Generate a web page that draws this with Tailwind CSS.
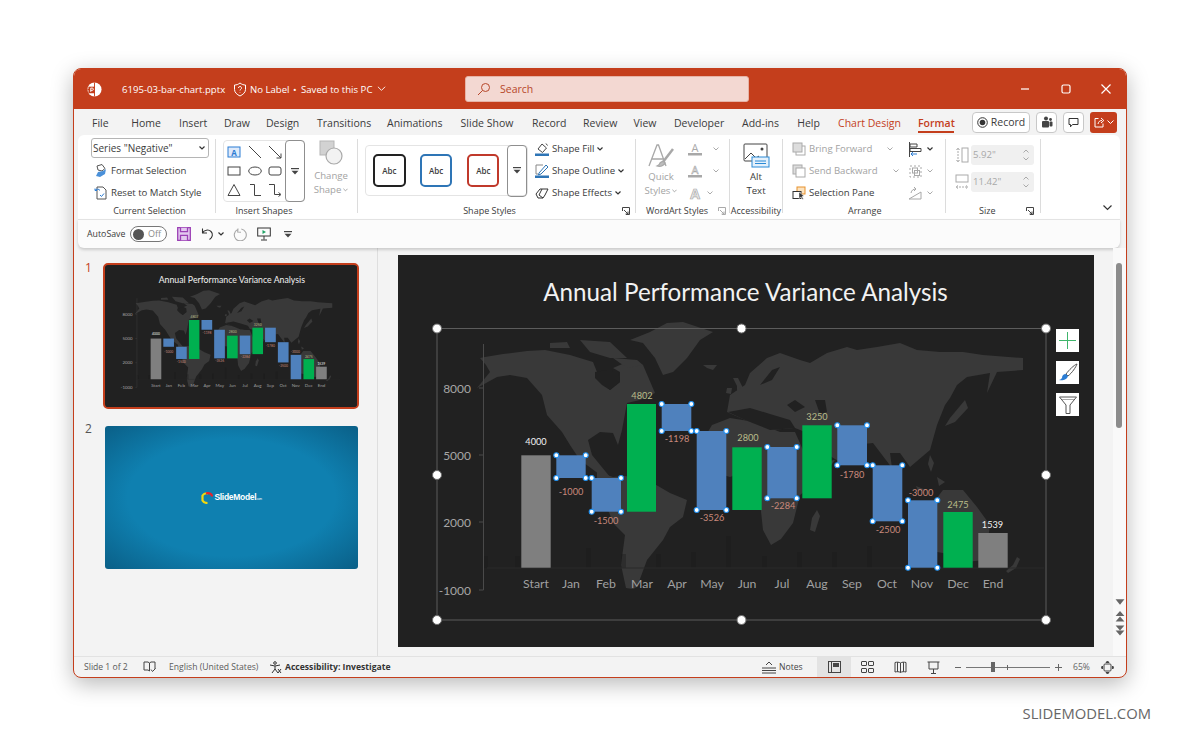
<!DOCTYPE html>
<html><head><meta charset="utf-8"><script src="https://cdn.jsdelivr.net/npm/@tailwindcss/browser@4"></script></head>
<body class="bg-white">
<div class="w-[1200px] h-[743px] overflow-hidden bg-white font-['Open_Sans',sans-serif] text-[#3b3b3b] pt-[68px] pl-[73px]">
<div class="w-[1054px] h-[610px] flex flex-col border border-[#c43e1c] rounded-lg bg-[#f3f3f3] shadow-[0_6px_22px_rgba(0,0,0,0.28)] overflow-hidden">

<!-- title bar -->
<div class="h-[40px] shrink-0 bg-[#c43e1c] text-white flex items-center text-[9.600px] whitespace-nowrap">
  <svg class="ml-[13px] w-[15px] h-[15px]" viewBox="0 0 16 16"><circle cx="8" cy="8" r="7.500" fill="#fff"/><path d="M8 .5v15M.5 8H8" stroke="#c43e1c" stroke-width="1"/><rect x="1.500" y="5" width="7" height="7" fill="#c43e1c"/><path d="M4 10.500V6.500h1.600a1.200 1.200 0 0 1 0 2.400H4" stroke="#fff" fill="none" stroke-width="1"/></svg>
  <span class="ml-[20px] w-[104px] pt-[2px]">6195-03-bar-chart.pptx</span>
  <svg class="ml-[7px] w-[14px] h-[15px]" viewBox="0 0 14 15" fill="none" stroke="#fff" stroke-width="1"><path d="M7 1c2 1.500 3.500 2 5.500 2v4.500c0 3-2.500 5-5.500 6.500-3-1.500-5.500-3.500-5.500-6.500V3C3.500 3 5 2.500 7 1z"/><path d="M5.500 6a1.500 1.500 0 1 1 2.200 1.300c-.5.3-.7.6-.7 1.200M7 10.500v.5"/></svg>
  <span class="ml-[3px] w-[39px] pt-[2px]">No Label</span><span class="ml-[4px] w-[3px] pt-[2px]">•</span><span class="ml-[5px] w-[72px] pt-[2px]">Saved to this PC</span>
  <svg class="ml-[4px] w-[9px] h-[6px]" viewBox="0 0 10 6" fill="none" stroke="#fff"><path d="M1 .5l4 4 4-4"/></svg>
  <div class="ml-[79px] w-[284px] h-[26px] rounded-[3px] bg-[#f3d8d2] border border-[#e6b3a6] flex items-center text-[#b7472a] text-[10.500px]">
    <svg class="ml-[11px] w-[14px] h-[14px]" viewBox="0 0 14 14" fill="none" stroke="#b7472a" stroke-width="1"><circle cx="8.500" cy="5.500" r="4"/><path d="M5.500 8.500L1 13"/></svg>
    <span class="ml-[9px] pt-[2px]">Search</span>
  </div>
  <svg class="ml-[271px] w-[10px] h-[10px]" viewBox="0 0 10 10" stroke="#f6dcd5" stroke-width="1.300"><path d="M1 5h8"/></svg>
  <svg class="ml-[31px] w-[10px] h-[10px]" viewBox="0 0 10 10" fill="none" stroke="#fff" stroke-width="1.200"><rect x="1" y="1" width="8" height="8" rx="1.500"/></svg>
  <svg class="ml-[30px] w-[10px] h-[10px]" viewBox="0 0 10 10" stroke="#fff" stroke-width="1.200"><path d="M.5.5l9 9M9.500.5l-9 9"/></svg>
</div>

<!-- tabs -->
<div class="h-[26px] shrink-0 flex items-center text-[10.500px] whitespace-nowrap">
  <div class="flex items-center h-full pt-[3px]">
    <span class="ml-[18px] w-[16px] text-center">File</span>
    <span class="ml-[23px] w-[30px] text-center">Home</span>
    <span class="ml-[18px] w-[27px] text-center">Insert</span>
    <span class="ml-[18px] w-[25px] text-center">Draw</span>
    <span class="ml-[17px] w-[33px] text-center">Design</span>
    <span class="ml-[18px] w-[52px] text-center">Transitions</span>
    <span class="ml-[18px] w-[55px] text-center">Animations</span>
    <span class="ml-[18px] w-[54px] text-center">Slide Show</span>
    <span class="ml-[18px] w-[33px] text-center">Record</span>
    <span class="ml-[18px] w-[33px] text-center">Review</span>
    <span class="ml-[17px] w-[24px] text-center">View</span>
    <span class="ml-[17px] w-[50px] text-center">Developer</span>
    <span class="ml-[17px] w-[39px] text-center">Add-ins</span>
    <span class="ml-[17px] w-[23px] text-center">Help</span>
    <span class="ml-[18px] w-[63px] text-center text-[#c43e1c]">Chart Design</span>
    <span class="relative ml-[17px] w-[36px] text-center font-semibold text-[#c43e1c] after:absolute after:left-0 after:right-0 after:-bottom-[2px] after:h-[2px] after:bg-[#c43e1c]">Format</span>
  </div>
  <div class="ml-[18px] w-[58px] h-[21px] rounded-[4px] border border-[#c8c8c8] bg-white flex items-center justify-center gap-[3px] text-[10.500px]">
    <svg class="w-[11px] h-[11px]" viewBox="0 0 11 11"><circle cx="5.500" cy="5.500" r="4.800" fill="none" stroke="#333"/><circle cx="5.500" cy="5.500" r="2.800" fill="#333"/></svg><span class="pt-[1px]">Record</span>
  </div>
  <div class="ml-[6px] w-[21px] h-[21px] rounded-[4px] border border-[#c8c8c8] bg-white flex items-center justify-center">
    <svg class="w-[12px] h-[12px]" viewBox="0 0 12 12" fill="#444"><circle cx="5" cy="2.500" r="2"/><circle cx="9.500" cy="3.500" r="1.400"/><rect x="1" y="5" width="7" height="6.500" rx="1"/><rect x="8.500" y="5.500" width="3" height="5" rx="1"/></svg>
  </div>
  <div class="ml-[6px] w-[21px] h-[21px] rounded-[4px] border border-[#c8c8c8] bg-white flex items-center justify-center">
    <svg class="w-[11px] h-[11px]" viewBox="0 0 11 11" fill="none" stroke="#333"><path d="M1 1.500h9v6H4.500L2.500 9.800V7.500H1z"/></svg>
  </div>
  <div class="ml-[6px] w-[27px] h-[21px] rounded-[3px] bg-[#c43e1c] flex items-center justify-center gap-[2px]">
    <svg class="w-[11px] h-[11px]" viewBox="0 0 11 11" fill="none" stroke="#fff"><path d="M4.500 1.500H1v8.500h8V6.500M4 7c.5-2.500 2-3.500 4-3.500M7 1l2.800 2.500L7 6"/></svg>
    <svg class="w-[7px] h-[5px]" viewBox="0 0 7 5" fill="none" stroke="#fff"><path d="M.5.500l3 3 3-3"/></svg>
  </div>
</div>

<!-- ribbon -->
<div class="ml-[4px] w-[1042px] h-[84px] shrink-0 bg-white rounded-t-md flex text-[9.600px] whitespace-nowrap">
  <!-- Current Selection -->
  <div class="w-[137px] h-full flex flex-col relative">
    <div class="ml-[13px] mt-[3px] w-[118px] h-[20px] rounded-[3px] border border-[#b5b5b5] bg-white flex items-center pl-[1px] pr-[3px] justify-between text-[10px]">
      <span>Series "Negative"</span>
      <svg class="w-[6px] h-[4px]" viewBox="0 0 6 4" fill="none" stroke="#333" stroke-width="1.200"><path d="M.5.500l2.500 2.500L5.500.500"/></svg>
    </div>
    <div class="ml-[16px] mt-[2px] h-[22px] flex items-center gap-[3px]">
      <svg class="w-[14px] h-[14px]" viewBox="0 0 14 14" fill="none"><path d="M3 2l5-1.500 3 4L8 7 4 6z" stroke="#555"/><path d="M4 8l5-1 3-2-1 5-5 3-4-1z" fill="#4a90d9"/></svg>
      <span>Format Selection</span>
    </div>
    <div class="ml-[16px] h-[22px] flex items-center gap-[3px]">
      <svg class="w-[14px] h-[14px]" viewBox="0 0 14 14" fill="none" stroke="#555"><path d="M3 1h6l3 3v9H3z"/><path d="M1 4.500a3 3 0 0 1 5 0M1 2.500v2h2" stroke="#2b7cd3"/><path d="M6 9l1.500 1.500L10 7.500" stroke="#2b7cd3"/></svg>
      <span>Reset to Match Style</span>
    </div>
    <div class="absolute bottom-[2px] left-0 right-0 text-center text-[9px] pl-[6px]">Current Selection</div>
  </div>
  <div class="w-px h-[74px] mt-[4px] bg-[#dcdcdc]"></div>
  <!-- Insert Shapes -->
  <div class="w-[141px] h-full relative flex">
    <div class="ml-[7px] mt-[5px] w-[82px] h-[62px] rounded-[4px] border border-[#e4e4e4] flex">
      <div class="w-[62px] grid grid-cols-3 place-items-center py-[2px]">
        <svg class="w-[14px] h-[14px] overflow-visible" viewBox="0 0 14 14"><rect x="1" y="2" width="12" height="10" fill="#dfeafa" stroke="#2b7cd3"/><text x="7" y="10.500" text-anchor="middle" font-size="8" font-weight="700" fill="#2b7cd3">A</text></svg>
        <svg class="w-[14px] h-[14px]" viewBox="0 0 14 14" stroke="#444"><path d="M1 1l12 12"/></svg>
        <svg class="w-[14px] h-[14px]" viewBox="0 0 14 14" stroke="#444" fill="none"><path d="M1 1l12 12M13 8.500V13H8.500"/></svg>
        <svg class="w-[14px] h-[14px]" viewBox="0 0 14 14" stroke="#444" fill="none"><rect x="1" y="3" width="12" height="8"/></svg>
        <svg class="w-[14px] h-[14px]" viewBox="0 0 14 14" stroke="#444" fill="none"><ellipse cx="7" cy="7" rx="6.300" ry="4"/></svg>
        <svg class="w-[14px] h-[14px]" viewBox="0 0 14 14" stroke="#444" fill="none"><rect x="1" y="3" width="12" height="8" rx="2"/></svg>
        <svg class="w-[14px] h-[14px]" viewBox="0 0 14 14" stroke="#444" fill="none"><path d="M7 1.500L13 12.500H1z"/></svg>
        <svg class="w-[14px] h-[14px]" viewBox="0 0 14 14" stroke="#444" fill="none"><path d="M2 1.500h4.500v11H13"/></svg>
        <svg class="w-[14px] h-[14px]" viewBox="0 0 14 14" stroke="#444" fill="none"><path d="M1 1.500h5.500v10H12M10.500 9.500l2.500 2-2.500 2"/></svg>
      </div>
      <div class="w-[20px] -my-px -mr-px border border-[#8f8f8f] rounded-[4px] flex items-center justify-center">
        <svg class="w-[8px] h-[7px]" viewBox="0 0 8 7" fill="#444"><rect y="0" width="8" height="1.200"/><path d="M.5 2.800h7L4 6.500z"/></svg>
      </div>
    </div>
    <div class="ml-[7px] mt-[5px] w-[38px] flex flex-col items-center text-[#a3a3a3] leading-[14px]">
      <svg class="w-[26px] h-[26px] mb-[3px]" viewBox="0 0 26 26"><rect x="2" y="1" width="14" height="14" fill="#d2d2d2" stroke="#b5b5b5"/><circle cx="16" cy="16" r="8" fill="#f2f2f2" stroke="#a9a9a9" stroke-width="1.200"/></svg>
      <span>Change</span><span class="flex items-center gap-[2px]">Shape<svg class="w-[5px] h-[4px]" viewBox="0 0 6 4" fill="none" stroke="#999"><path d="M.5.500l2.500 2.500L5.500.500"/></svg></span>
    </div>
    <div class="absolute bottom-[2px] left-0 w-[96px] text-center text-[9px]">Insert Shapes</div>
  </div>
  <div class="w-px h-[74px] mt-[4px] bg-[#dcdcdc]"></div>
  <!-- Shape styles -->
  <div class="w-[277px] h-full relative flex">
    <div class="ml-[7px] mt-[10px] w-[163px] h-[51px] rounded-[4px] border border-[#e4e4e4] flex items-center">
      <div class="ml-[7px] w-[33px] h-[33px] rounded-[5px] border-2 border-[#222] flex items-center justify-center text-[8px] font-semibold">Abc</div>
      <div class="ml-[14px] w-[33px] h-[33px] rounded-[5px] border-2 border-[#2e75b6] flex items-center justify-center text-[8px] font-semibold">Abc</div>
      <div class="ml-[15px] w-[32px] h-[33px] rounded-[5px] border-2 border-[#c0392b] flex items-center justify-center text-[8px] font-semibold">Abc</div>
      <div class="ml-[8px] w-[20px] h-[52px] border border-[#8f8f8f] rounded-[4px] flex items-center justify-center">
        <svg class="w-[8px] h-[7px]" viewBox="0 0 8 7" fill="#444"><rect y="0" width="8" height="1.200"/><path d="M.5 2.800h7L4 6.500z"/></svg>
      </div>
    </div>
    <div class="ml-[7px] mt-[3px] flex flex-col">
      <div class="h-[22px] flex items-center gap-[3px]"><svg class="w-[14px] h-[14px]" viewBox="0 0 14 14" fill="none"><path d="M3 7l4-5 4.500 4-4 4.500z" stroke="#444"/><path d="M11 1.500l1.500 2" stroke="#444"/><rect y="11.500" width="14" height="2.500" fill="#2e75b6"/></svg>Shape Fill<svg class="w-[6px] h-[4px]" viewBox="0 0 6 4" fill="none" stroke="#333" stroke-width="1.200"><path d="M.5.500l2.500 2.500L5.500.500"/></svg></div>
      <div class="h-[22px] flex items-center gap-[3px]"><svg class="w-[14px] h-[14px]" viewBox="0 0 14 14" fill="none"><path d="M1 1h7M1 1v9h2" stroke="#888"/><path d="M4 9l7-8 2 2-7 7-2.500 1z" stroke="#2e75b6"/><rect y="11.500" width="14" height="2.500" fill="#2e75b6"/></svg>Shape Outline<svg class="w-[6px] h-[4px]" viewBox="0 0 6 4" fill="none" stroke="#333" stroke-width="1.200"><path d="M.5.500l2.500 2.500L5.500.500"/></svg></div>
      <div class="h-[22px] flex items-center gap-[3px]"><svg class="w-[14px] h-[14px]" viewBox="0 0 14 14" fill="none" stroke="#333"><path d="M1 8l4-5h8l-3 6-2 3H3z"/><path d="M7 3L4 9l4 3" /></svg>Shape Effects<svg class="w-[6px] h-[4px]" viewBox="0 0 6 4" fill="none" stroke="#333" stroke-width="1.200"><path d="M.5.500l2.500 2.500L5.500.500"/></svg></div>
    </div>
    <div class="absolute bottom-[2px] left-[7px] w-[249px] text-center text-[9px]">Shape Styles</div>
    <svg class="absolute right-[5px] bottom-[4px] w-[8px] h-[8px]" viewBox="0 0 8 8" fill="none" stroke="#444"><path d="M.5 4V.5H7.500V7.500H4M2 3l4 4M6 4.500V7H3.500"/></svg>
  </div>
  <div class="w-px h-[74px] mt-[4px] bg-[#dcdcdc]"></div>
  <!-- WordArt -->
  <div class="w-[93px] h-full relative flex text-[#a3a3a3]">
    <div class="ml-[7px] mt-[8px] w-[36px] flex flex-col items-center leading-[14px]">
      <svg class="w-[28px] h-[26px] mb-[1px]" viewBox="0 0 28 26" fill="none" stroke="#a8a8a8" stroke-width="1.300"><path d="M2 23L10 2h1.500L19 23M5 16h11"/><path d="M26 6L16 19" stroke-width="2.500"/><path d="M13 20c2-2 4-2 5 0-1 3-5 4-8 3 2-1 3-2 3-3z" fill="#bdbdbd"/></svg>
      <span>Quick</span><span class="flex items-center gap-[2px]">Styles<svg class="w-[5px] h-[4px]" viewBox="0 0 6 4" fill="none" stroke="#999"><path d="M.5.500l2.500 2.500L5.500.500"/></svg></span>
    </div>
    <div class="ml-[9px] mt-[3px] flex flex-col">
      <div class="h-[22px] flex items-center gap-[11px]"><svg class="w-[14px] h-[14px] overflow-visible" viewBox="0 0 14 14"><text x="7" y="10" text-anchor="middle" font-size="11" fill="#aaa">A</text><rect x="0" y="11" width="14" height="2.500" fill="#a8a8a8"/></svg><svg class="w-[6px] h-[4px]" viewBox="0 0 6 4" fill="none" stroke="#aaa"><path d="M.5.500l2.500 2.500L5.500.500"/></svg></div>
      <div class="h-[22px] flex items-center gap-[11px]"><svg class="w-[14px] h-[14px] overflow-visible" viewBox="0 0 14 14"><text x="7" y="10" text-anchor="middle" font-size="11" fill="none" stroke="#aaa" stroke-width=".6">A</text><rect x="0" y="11" width="14" height="2.500" fill="#a8a8a8"/></svg><svg class="w-[6px] h-[4px]" viewBox="0 0 6 4" fill="none" stroke="#aaa"><path d="M.5.500l2.500 2.500L5.500.500"/></svg></div>
      <div class="h-[22px] flex items-center gap-[5px]"><svg class="w-[14px] h-[14px] overflow-visible" viewBox="0 0 14 14"><text x="7" y="12.500" text-anchor="middle" font-size="14" font-weight="700" fill="#e8e8e8" stroke="#aaa" stroke-width=".7">A</text></svg><svg class="w-[6px] h-[4px]" viewBox="0 0 6 4" fill="none" stroke="#aaa"><path d="M.5.500l2.500 2.500L5.500.500"/></svg></div>
    </div>
    <div class="absolute bottom-[2px] left-[10px] text-[9px] text-[#3b3b3b]">WordArt Styles</div>
    <svg class="absolute right-[3px] bottom-[4px] w-[8px] h-[8px]" viewBox="0 0 8 8" fill="none" stroke="#aaa"><path d="M.5 4V.5H7.500V7.500H4M2 3l4 4M6 4.500V7H3.500"/></svg>
  </div>
  <div class="w-px h-[74px] mt-[4px] bg-[#dcdcdc]"></div>
  <!-- Accessibility -->
  <div class="w-[52px] h-full relative flex flex-col items-center">
    <svg class="mt-[8px] mb-[1px] w-[27px] h-[26px]" viewBox="0 0 27 26" fill="none"><rect x="1" y="1" width="23" height="17" rx="1" stroke="#444"/><path d="M2 16l6-6 5 5 3-2" stroke="#444"/><circle cx="19" cy="6" r="1.500" fill="#444"/><rect x="9" y="14" width="17" height="10" fill="#e5f1fb" stroke="#2b8ad6"/><path d="M12 18h11M12 20.500h11" stroke="#2b8ad6"/></svg>
    <span class="leading-[14px]">Alt</span><span class="leading-[14px]">Text</span>
    <div class="absolute bottom-[2px] left-0 right-0 text-center text-[9px]">Accessibility</div>
  </div>
  <div class="w-px h-[74px] mt-[4px] bg-[#dcdcdc]"></div>
  <!-- Arrange -->
  <div class="w-[162px] h-full relative flex">
    <div class="ml-[9px] mt-[3px] w-[113px] flex flex-col text-[#a3a3a3]">
      <div class="h-[22px] flex items-center"><svg class="w-[14px] h-[14px]" viewBox="0 0 14 14" fill="none" stroke="#aaa"><rect x="4" y="4" width="9" height="9"/><rect x="1" y="1" width="9" height="9" fill="#ddd"/></svg><span class="ml-[3px]">Bring Forward</span><svg class="ml-[15px] w-[6px] h-[4px]" viewBox="0 0 6 4" fill="none" stroke="#aaa"><path d="M.5.500l2.500 2.500L5.500.500"/></svg></div>
      <div class="h-[22px] flex items-center"><svg class="w-[14px] h-[14px]" viewBox="0 0 14 14" fill="none" stroke="#aaa"><rect x="1" y="1" width="9" height="9" fill="#ddd"/><rect x="4" y="4" width="9" height="9" fill="#fff"/></svg><span class="ml-[3px]">Send Backward</span><svg class="ml-[15px] w-[6px] h-[4px]" viewBox="0 0 6 4" fill="none" stroke="#aaa"><path d="M.5.500l2.500 2.500L5.500.500"/></svg></div>
      <div class="h-[22px] flex items-center text-[#3b3b3b]"><svg class="w-[14px] h-[14px]" viewBox="0 0 14 14" fill="none"><rect x="5" y="1" width="8" height="7" fill="#fbe3c0" stroke="#e8912d"/><rect x="1" y="5.500" width="8" height="7" fill="#fff" stroke="#333"/><path d="M7 6l5 4-2 .5 1.500 2.500-1 .5L9 11l-2 1.500z" fill="#333" stroke="#fff" stroke-width=".5"/></svg><span class="ml-[3px]">Selection Pane</span></div>
    </div>
    <div class="ml-[3px] mt-[3px] flex flex-col">
      <div class="h-[22px] flex items-center gap-[4px]"><svg class="w-[15px] h-[15px]" viewBox="0 0 15 15" fill="none"><path d="M1.500 0v15" stroke="#444"/><path d="M2 2h7v3H2zM2 6.500h11v3H2z" stroke="#444"/><path d="M9 12H3M5 10l-2 2 2 2" stroke="#2b7cd3"/></svg><svg class="w-[6px] h-[4px]" viewBox="0 0 6 4" fill="none" stroke="#333" stroke-width="1.200"><path d="M.5.500l2.500 2.500L5.500.500"/></svg></div>
      <div class="h-[22px] flex items-center gap-[4px]"><svg class="w-[15px] h-[15px]" viewBox="0 0 15 15" fill="none" stroke="#a8a8a8"><rect x="2" y="2" width="11" height="11" stroke-dasharray="2 2"/><rect x="4.500" y="4" width="5" height="5"/><rect x="6.500" y="6.500" width="5" height="5"/></svg><svg class="w-[6px] h-[4px]" viewBox="0 0 6 4" fill="none" stroke="#aaa"><path d="M.5.500l2.500 2.500L5.500.500"/></svg></div>
      <div class="h-[22px] flex items-center gap-[4px]"><svg class="w-[15px] h-[15px]" viewBox="0 0 15 15" fill="none" stroke="#a8a8a8"><path d="M1 13L13 6v7zM3 7a5 5 0 0 1 5-4M6 1l2 2-2 2"/></svg><svg class="w-[6px] h-[4px]" viewBox="0 0 6 4" fill="none" stroke="#aaa"><path d="M.5.500l2.500 2.500L5.500.500"/></svg></div>
    </div>
    <div class="absolute bottom-[2px] left-[65px] text-[9px]">Arrange</div>
  </div>
  <div class="w-px h-[74px] mt-[4px] bg-[#dcdcdc]"></div>
  <!-- Size -->
  <div class="w-[94px] h-full relative">
    <div class="ml-[9px] mt-[10px] flex items-center gap-[2px]">
      <svg class="w-[14px] h-[16px]" viewBox="0 0 14 16" fill="none" stroke="#aaa"><rect x="7" y="1" width="6" height="14"/><path d="M3 1v14M1.500 3L3 1l1.500 2M1.500 13L3 15l1.500-2" stroke-dasharray="2 1"/></svg>
      <div class="w-[63px] h-[20px] rounded-[3px] bg-[#f0f0f0] text-[#a8a8a8] flex items-center justify-between pl-[2px] pr-[5px]"><span>5.92"</span><svg class="w-[6px] h-[12px]" viewBox="0 0 6 12" fill="none" stroke="#aaa"><path d="M.5 3.500L3 1l2.500 2.500M.5 8.500L3 11l2.500-2.500"/></svg></div>
    </div>
    <div class="ml-[9px] mt-[7px] flex items-center gap-[2px]">
      <svg class="w-[14px] h-[16px]" viewBox="0 0 14 16" fill="none" stroke="#aaa"><rect x="1" y="1" width="12" height="7"/><path d="M1 13h12M3 11.500L1 13l2 1.500M11 11.500L13 13l-2 1.500" stroke-dasharray="2 1"/></svg>
      <div class="w-[63px] h-[20px] rounded-[3px] bg-[#f0f0f0] text-[#a8a8a8] flex items-center justify-between pl-[2px] pr-[5px]"><span>11.42"</span><svg class="w-[6px] h-[12px]" viewBox="0 0 6 12" fill="none" stroke="#aaa"><path d="M.5 3.500L3 1l2.500 2.500M.5 8.500L3 11l2.500-2.500"/></svg></div>
    </div>
    <div class="absolute bottom-[2px] left-[33px] text-[9px]">Size</div>
    <svg class="absolute right-[6px] bottom-[4px] w-[8px] h-[8px]" viewBox="0 0 8 8" fill="none" stroke="#444"><path d="M.5 4V.5H7.500V7.500H4M2 3l4 4M6 4.500V7H3.500"/></svg>
  </div>
  <div class="w-px h-[74px] mt-[4px] bg-[#dcdcdc]"></div>
  <div class="flex-1 relative">
    <svg class="absolute right-[8px] bottom-[8px] w-[9px] h-[6px]" viewBox="0 0 9 6" fill="none" stroke="#333" stroke-width="1.200"><path d="M.5.500l4 4 4-4"/></svg>
  </div>
</div>

<!-- quick access -->
<div class="ml-[4px] w-[1042px] h-[29px] shrink-0 bg-[#fbfbfb] border-t border-[#e3e3e3] rounded-b-md shadow-[0_2px_3px_rgba(0,0,0,0.16)] flex items-center text-[8.800px] relative">
  <span class="ml-[9px] w-[38px] pt-[2px]">AutoSave</span>
  <div class="ml-[5px] w-[37px] h-[16px] rounded-full border border-[#777] flex items-center pl-[2px] bg-white">
    <span class="w-[11px] h-[11px] rounded-full bg-[#555]"></span><span class="ml-[4px] text-[#8a8a8a] text-[9px]">Off</span>
  </div>
  <svg class="ml-[10px] w-[14px] h-[14px]" viewBox="0 0 14 14" fill="#e2c8ef" stroke="#9b3fb5" stroke-width="1.300"><path d="M.7.700h12.600v12.600H.7z"/><path d="M3.500.700v4h7v-4M3.500 13.300v-5h7v5"/></svg>
  <svg class="ml-[10px] w-[14px] h-[14px]" viewBox="0 0 14 14" fill="none" stroke="#333" stroke-width="1.100"><path d="M1.500 1.500v4.500H6M1.500 6c1.500-3 6-4 8.500-1.500 2.500 2.500 1.500 6-1.500 8"/></svg>
  <svg class="ml-[3px] w-[6px] h-[4px]" viewBox="0 0 6 4" fill="none" stroke="#333" stroke-width="1.200"><path d="M.5.500l2.500 2.500L5.500.500"/></svg>
  <svg class="ml-[9px] w-[14px] h-[14px]" viewBox="0 0 14 14" fill="none" stroke="#a8a8a8" stroke-width="1.100"><path d="M5 1.500l-.3 3.500 3.300.3M4.700 2.500a6 6 0 1 0 3.600-.5"/></svg>
  <svg class="ml-[10px] w-[14px] h-[14px]" viewBox="0 0 14 14" fill="none" stroke="#333"><rect x=".7" y="1" width="12.600" height="8"/><path d="M7 9v3.500M4 13h6"/><path d="M5.500 3l3.500 2-3.500 2z" fill="#21a366" stroke="none"/></svg>
  <svg class="ml-[13px] w-[8px] h-[7px]" viewBox="0 0 8 7" fill="#444"><rect width="8" height="1.200"/><path d="M.5 2.800h7L4 6.500z"/></svg>
</div>

<!-- main -->
<div class="flex-1 flex min-h-0">
  <!-- thumbnails -->
  <div class="w-[304px] shrink-0 border-r border-[#dedede] pt-[15px] pl-[11px] flex flex-col">
    <div class="flex">
      <span class="w-[18px] text-[12px] leading-[12px] mt-[-1px] text-[#c43e1c]">1</span>
      <div class="w-[256px] h-[146px] border-2 border-[#c43e1c] rounded-[5px] overflow-hidden bg-[#212121] p-px">
        <svg class="w-[252px] h-[142px] block font-['Lato',sans-serif]" viewBox="398 255 696 392"><use href="#slideart"/></svg>
      </div>
    </div>
    <div class="flex mt-[17px]">
      <span class="w-[20px] text-[12px] leading-[12px] mt-[-3px] text-[#555]">2</span>
      <div class="w-[253px] h-[143px] rounded-[3px] bg-[radial-gradient(ellipse_at_center,#0f80b0_0%,#0f80b0_58%,#0a5f87_100%)] flex items-center justify-center gap-[1px] text-white">
        <svg class="w-[12px] h-[12px]" viewBox="0 0 12 12" fill="none" stroke-width="2.200"><path d="M7 1.500a5 5 0 0 0-5.500 2v5c1 2 3 2.500 5 2.500" stroke="#f2d80e"/><path d="M5 1.400c2.500-1 6 .5 6 3" stroke="#e8212b"/></svg>
        <span class="font-['Liberation_Sans',sans-serif] text-[8.500px] font-bold tracking-[-0.3px]">SlideModel<span class="text-[3px] font-normal">.com</span></span>
      </div>
    </div>
  </div>

  <!-- slide area -->
  <div class="flex-1 min-w-0 pl-[20px] pt-[7px] relative">
    <div class="relative w-[696px] h-[392px] bg-[#212121]">
      <svg class="block w-[696px] h-[392px] font-['Lato',sans-serif]" viewBox="398 255 696 392">
        <g id="slideart">
          <rect x="398" y="255" width="696" height="392" fill="#212121"/>
          <text x="745.500" y="301" text-anchor="middle" font-size="24.200" fill="#f2f2f2">Annual Performance Variance Analysis</text>
          <!-- world map -->
          <g fill="#393939">
            <!-- North America -->
            <path d="M480 358L485 357L503 354L527 351L545 350L570 355L593 362L597 372L597 378L610 390L620 382L620 372L613 368L627 362L643 365L655 393L640 400L627 403L622 430L618 445L613 433L600 432L588 440L592 455L610 477L603 477L580 460L570 445L562 432L547 415L542 395L527 378L510 375L497 377L477 388L490 372L486 365Z"/>
            <!-- South America -->
            <path d="M597 467L607 475L613 477L625 476L647 480L658 486L670 493L687 500L683 517L670 527L663 540L647 560L637 587L633 589L626 588L621 565L625 535L614 524L607 508L599 496L597 484Z"/>
            <!-- Greenland -->
            <path d="M630 340L650 332L667 323L683 322L713 332L700 340L687 358L673 372L663 375L655 358L643 343Z"/>
            <!-- Arctic islands, Iceland, UK -->
            <path d="M550 343L567 342L570 348L550 348ZM580 340L610 342L627 358L610 358L590 352ZM613 358L637 360L643 365L627 368Z"/>
            <path d="M703 365H717L713 370L707 368Z"/>
            <path d="M733 378L738 378L742 386L745 393L737 393L737 386ZM727 388L732 388L731 394L726 393Z"/>
            <!-- Eurasia -->
            <path d="M750 373L767 358L780 353L800 360L810 363L827 353L847 347L857 350L877 347L900 343L917 350L940 352L963 352L983 355L1023 358L1023 370L997 372L987 393L990 373L967 377L957 385L950 398L945 405L937 425L930 450L910 467L900 453L890 453L892 468L873 443L855 445L840 462L820 450L805 432L795 428L770 430L745 420L727 412L730 395L745 385Z"/>
            <path d="M965 400L968 408L955 422L945 426L950 418Z"/>
            <!-- Africa -->
            <path d="M697 450L712 425L730 418L755 422L780 432L795 432L803 450L815 462L835 460L820 480L800 495L793 523L781 539L771 545L763 530L760 502L754 482L738 474L730 477L712 472L698 450Z"/>
            <path d="M817 510L820 516L815 532L810 530L812 518Z"/>
            <!-- Oceania -->
            <path d="M943 490L963 490L977 507L990 525L985 560L965 562L949 554L931 551L923 521L933 503Z"/>
            <path d="M1017 557L1020 559L1016 568L1008 573L1006 571L1013 565Z"/>
            <path d="M930 455L934 463L931 472L928 464ZM937 477L945 482L939 486ZM916 486L926 490L918 491Z"/>
          </g>
          <g fill="#212121">
            <path d="M595 372L607 370L618 372L620 382L610 390L602 385L595 378Z"/>
            <path d="M772 370L780 367L772 380L760 385L768 375ZM787 405L795 400L805 407L795 412ZM815 400L825 400L827 412L820 414ZM728 412L750 408L770 414L790 420L795 428L770 430L745 420Z"/>
          </g>
          <g fill="#191919" opacity=".35">
            <rect x="483" y="556" width="5" height="12"/><rect x="515" y="556" width="5" height="12"/><rect x="586" y="548" width="5" height="20"/><rect x="621" y="554" width="5" height="14"/><rect x="656" y="554" width="5" height="14"/><rect x="691" y="552" width="5" height="16"/><rect x="726" y="536" width="5" height="32"/><rect x="762" y="556" width="5" height="12"/><rect x="797" y="552" width="5" height="16"/><rect x="832" y="552" width="5" height="16"/><rect x="867" y="546" width="5" height="22"/>
          </g>
          <path d="M487 568H1044" stroke="#2a2a2a"/>
          <!-- axis -->
          <path d="M483.500 344V590M479 388h4.500M479 455h4.500M479 522h4.500M479 590h4.500" stroke="#4a4a4a" fill="none"/>
          <g font-size="12" fill="#a6a6a6" text-anchor="end">
            <text x="471" y="392.500">8000</text><text x="471" y="459.500">5000</text><text x="471" y="526.500">2000</text><text x="471" y="594.500">-1000</text>
          </g>
          <!-- bars -->
          <g fill="#7f7f7f"><rect x="521.300" y="455.300" width="29.400" height="112.400"/><rect x="978.300" y="533" width="29.400" height="34.700"/></g>
          <g fill="#00b050"><rect x="627" y="404" width="29" height="107.700"/><rect x="732.300" y="447.300" width="29.400" height="62.700"/><rect x="802.300" y="425.300" width="29.400" height="73"/><rect x="943.300" y="512" width="29.400" height="55.700"/></g>
          <g fill="#4f81bd"><rect x="556.300" y="455.300" width="29.400" height="22.700"/><rect x="591.700" y="478" width="29.300" height="33.700"/><rect x="661.700" y="404" width="29.600" height="27"/><rect x="696.700" y="431" width="29.600" height="79"/><rect x="767.300" y="447" width="29.400" height="51.300"/><rect x="837.300" y="425.300" width="29.700" height="40"/><rect x="872.700" y="465.300" width="29.600" height="56"/><rect x="908" y="500.300" width="29.300" height="67.400"/></g>
          <!-- data labels -->
          <g font-size="9.200" text-anchor="middle">
            <g fill="#f2f2f2"><text x="536" y="445">4000</text><text x="992.500" y="527.500">1539</text></g>
            <g fill="#b9bd8a"><text x="642" y="399">4802</text><text x="748" y="441">2800</text><text x="817" y="420">3250</text><text x="958" y="508">2475</text></g>
            <g fill="#c9897c"><text x="571" y="494.500">-1000</text><text x="606" y="523.500">-1500</text><text x="677" y="441.500">-1198</text><text x="712" y="520.500">-3526</text><text x="783" y="508.500">-2284</text><text x="852" y="477.500">-1780</text><text x="888" y="532.500">-2500</text><text x="921" y="495.500">-3000</text></g>
          </g>
          <!-- categories -->
          <g font-size="12.300" fill="#a0a0a0" text-anchor="middle">
            <text x="536" y="588">Start</text><text x="571" y="588">Jan</text><text x="606" y="588">Feb</text><text x="642" y="588">Mar</text><text x="677" y="588">Apr</text><text x="712" y="588">May</text><text x="747" y="588">Jun</text><text x="782" y="588">Jul</text><text x="817" y="588">Aug</text><text x="852" y="588">Sep</text><text x="887" y="588">Oct</text><text x="922" y="588">Nov</text><text x="958" y="588">Dec</text><text x="993" y="588">End</text>
          </g>
        </g>
        <!-- selection frame -->
        <rect x="437" y="328.500" width="609" height="291.500" fill="none" stroke="#5c5c5c"/>
        <g fill="#fff" stroke="#6b6b6b" stroke-width="1">
          <circle cx="437" cy="328.500" r="4.500"/><circle cx="741.500" cy="328.500" r="4.500"/><circle cx="1046" cy="328.500" r="4.500"/><circle cx="437" cy="475" r="4.500"/><circle cx="1046" cy="475" r="4.500"/><circle cx="437" cy="620" r="4.500"/><circle cx="741.500" cy="620" r="4.500"/><circle cx="1046" cy="620" r="4.500"/>
        </g>
        <g fill="#fff" stroke="#1e8ff0" stroke-width="1.100">
          <circle cx="556.300" cy="455.300" r="2.500"/><circle cx="585.700" cy="455.300" r="2.500"/><circle cx="556.300" cy="478" r="2.500"/><circle cx="585.700" cy="478" r="2.500"/>
          <circle cx="591.700" cy="478" r="2.500"/><circle cx="621" cy="478" r="2.500"/><circle cx="591.700" cy="511.700" r="2.500"/><circle cx="621" cy="511.700" r="2.500"/>
          <circle cx="661.700" cy="404" r="2.500"/><circle cx="691.300" cy="404" r="2.500"/><circle cx="661.700" cy="431" r="2.500"/><circle cx="691.300" cy="431" r="2.500"/>
          <circle cx="696.700" cy="431" r="2.500"/><circle cx="726.300" cy="431" r="2.500"/><circle cx="696.700" cy="510" r="2.500"/><circle cx="726.300" cy="510" r="2.500"/>
          <circle cx="767.300" cy="447" r="2.500"/><circle cx="796.700" cy="447" r="2.500"/><circle cx="767.300" cy="498.300" r="2.500"/><circle cx="796.700" cy="498.300" r="2.500"/>
          <circle cx="837.300" cy="425.300" r="2.500"/><circle cx="867" cy="425.300" r="2.500"/><circle cx="837.300" cy="465.300" r="2.500"/><circle cx="867" cy="465.300" r="2.500"/>
          <circle cx="872.700" cy="465.300" r="2.500"/><circle cx="902.300" cy="465.300" r="2.500"/><circle cx="872.700" cy="521.300" r="2.500"/><circle cx="902.300" cy="521.300" r="2.500"/>
          <circle cx="908" cy="500.300" r="2.500"/><circle cx="937.300" cy="500.300" r="2.500"/><circle cx="908" cy="567.700" r="2.500"/><circle cx="937.300" cy="567.700" r="2.500"/>
        </g>
      </svg>
      <!-- chart buttons -->
      <div class="absolute left-[658px] top-[74px] flex flex-col gap-[9px]">
        <div class="w-[23px] h-[23px] bg-white flex items-center justify-center"><svg class="w-[19px] h-[19px]" viewBox="0 0 19 19" stroke="#3fb56b" stroke-width="1"><path d="M9.500 1v17M1 9.500h17"/></svg></div>
        <div class="w-[23px] h-[23px] bg-white flex items-center justify-center"><svg class="w-[20px] h-[20px]" viewBox="0 0 20 20" fill="none"><path d="M19 1c-3 1-8 6-11 10l2 2c4-3 8-9 9-12z" stroke="#555"/><path d="M8 11c-3 0-4 2-4 4-1 1-2 2-3 2 3 1 8 0 9-4z" fill="#2b7cd3"/></svg></div>
        <div class="w-[23px] h-[23px] bg-white flex items-center justify-center"><svg class="w-[20px] h-[20px]" viewBox="0 0 20 20" fill="none" stroke="#555"><path d="M1.500 2h17l-6.500 8v8.500H8V10z"/><path d="M4 4.500h12" stroke="#aaa"/></svg></div>
      </div>
    </div>
    <!-- scrollbar -->
    <div class="absolute right-0 top-0 bottom-0 w-[13px] bg-[#f9f9f9] flex flex-col items-center">
      <div class="w-[6px] h-[165px] mt-[15px] rounded-full bg-[#8c8c8c] mr-[1px]"></div>
      <div class="flex-1"></div>
      <svg class="w-[10px] h-[8px] mb-[5px]" viewBox="0 0 9 7" fill="#666"><path d="M.5 1h8L4.500 6z"/></svg>
      <svg class="w-[10px] h-[11px] mb-[3px]" viewBox="0 0 9 10" fill="#666"><path d="M4.500 0L8.500 4.500H.5zM4.500 5L8.500 9.500H.5z"/></svg>
      <svg class="w-[10px] h-[11px] mb-[20px]" viewBox="0 0 9 10" fill="#666"><path d="M.5.500h8L4.500 5zM.5 5h8L4.500 9.500z"/></svg>
    </div>
  </div>
</div>

<!-- status bar -->
<div class="h-[21px] shrink-0 border-t border-[#e2e2e2] flex items-center text-[8.600px] text-[#5a5a5a] whitespace-nowrap">
  <span class="ml-[10px] w-[44px]">Slide 1 of 2</span>
  <svg class="ml-[15px] w-[13px] h-[12px]" viewBox="0 0 13 12" fill="none" stroke="#444"><path d="M1 1h4l1.500 1L8 1h4v7M1 1v8h4l1.500 1M6.500 2v8M8 8.500l1.500 2 3-3"/></svg>
  <span class="ml-[13px] w-[87px]">English (United States)</span>
  <svg class="ml-[13px] w-[13px] h-[13px]" viewBox="0 0 13 13" fill="none" stroke="#333"><circle cx="6" cy="2" r="1.300"/><path d="M1 4l5 1 5-1M6 5v3M6 8l-3 4M6 8l3 4M9 8l3 4M12 8l-3 4"/></svg>
  <span class="ml-[3px] font-bold text-[#333]">Accessibility: Investigate</span>
  <div class="flex-1"></div>
  <svg class="w-[14px] h-[13px]" viewBox="0 0 14 13" fill="none" stroke="#444"><path d="M4 4l3-3 3 3M0 7h14M0 9.500h14M0 12h14"/></svg>
  <span class="ml-[3px] w-[22px] text-[#444]">Notes</span>
  <div class="ml-[16px] w-[34px] h-full bg-[#e3e3e3] flex items-center justify-center"><svg class="w-[13px] h-[12px]" viewBox="0 0 13 12" fill="none" stroke="#444"><rect x=".5" y=".5" width="12" height="11"/><path d="M3.500.5v11"/><rect x="5.500" y="2.500" width="5" height="3" fill="#444"/></svg></div>
  <svg class="ml-[10px] w-[13px] h-[12px]" viewBox="0 0 13 12" fill="none" stroke="#444"><rect x=".5" y=".5" width="5" height="4" rx=".5"/><rect x="7.500" y=".5" width="5" height="4" rx=".5"/><rect x=".5" y="7.500" width="5" height="4" rx=".5"/><rect x="7.500" y="7.500" width="5" height="4" rx=".5"/></svg>
  <svg class="ml-[20px] w-[13px] h-[12px]" viewBox="0 0 13 12" fill="none" stroke="#444"><path d="M6.500 2C5 1 3 1 1 1.500V11c2-.5 4-.5 5.500.5 1.500-1 3.500-1 5.500-.5V1.500C10 1 8 1 6.500 2zM6.500 2v9.500M3.500 1.200v9.500M9.500 1.200v9.500"/></svg>
  <svg class="ml-[20px] w-[13px] h-[13px]" viewBox="0 0 13 13" fill="none" stroke="#444"><path d="M.5 1h12M2 1v7h9V1M6.500 8v4M4 12.500h5"/></svg>
  <span class="ml-[15px] w-[6px] h-px bg-[#666]"></span>
  <div class="ml-[5px] w-[84px] h-[10px] relative"><div class="absolute top-[5px] left-0 right-0 h-px bg-[#777]"></div><div class="absolute left-[25px] top-0 w-[4px] h-[10px] bg-[#666]"></div><div class="absolute left-[41px] top-[3px] w-px h-[5px] bg-[#666]"></div></div>
  <svg class="ml-[5px] w-[7px] h-[7px]" viewBox="0 0 7 7" stroke="#666"><path d="M3.500 0v7M0 3.500h7"/></svg>
  <span class="ml-[11px] w-[18px] text-[#666]">65%</span>
  <svg class="ml-[10px] mr-[12px] w-[13px] h-[13px]" viewBox="0 0 13 13" fill="none" stroke="#444"><rect x="3" y="3" width="7" height="7" rx="1"/><path d="M6.500 0l-1.500 1.500h3zM6.500 13L5 11.500h3zM0 6.500L1.500 5v3zM13 6.500L11.500 5v3z" fill="#444"/></svg>
</div>
</div>
<div class="w-[1078px] mt-[26px] text-right text-[14.800px] text-[#666] font-['Open_Sans',sans-serif] leading-[18px]">SLIDEMODEL.COM</div>
</div>
</body></html>
